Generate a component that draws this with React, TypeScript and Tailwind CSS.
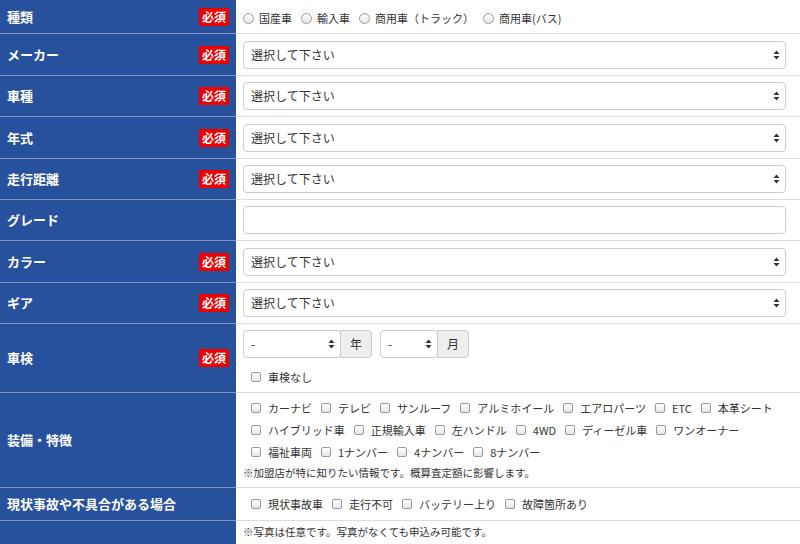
import React from "react";

const F = { fontFamily: '"Noto Sans CJK JP","Liberation Sans",sans-serif' };

function Badge() {
  return <span className="bg-[#ee0000] text-white text-[12px] font-bold leading-[18px] px-[3px] h-[18px] inline-block">必須</span>;
}
function Arrows() {
  return (
    <svg width="7" height="10" viewBox="0 0 7 10" className="absolute right-[5px] top-1/2 -translate-y-1/2">
      <path d="M3.5 0.5L6.5 4H0.5Z M3.5 9.5L6.5 6H0.5Z" fill="#333" />
    </svg>
  );
}
function Select({ text = "選択して下さい", w = "w-full" }: { text?: string; w?: string }) {
  return (
    <div className={`relative ${w} h-[28px] border border-[#ccc] rounded-[4px] bg-white text-[12px] text-[#333] pl-[7px] leading-[26px]`}>
      {text}
      <Arrows />
    </div>
  );
}
function Radio({ label }: { label: string }) {
  return (
    <span className="inline-flex items-center gap-[5px] mr-[9px] whitespace-nowrap">
      <span className="w-[11px] h-[11px] rounded-full border border-[#999] bg-gradient-to-b from-white to-[#e6e6e6]" />
      <span>{label}</span>
    </span>
  );
}
function Check({ label }: { label: string }) {
  return (
    <span className="inline-flex items-center gap-[7px] mr-[9px] whitespace-nowrap">
      <span className="w-[10px] h-[10px] rounded-[2px] border border-[#999] bg-gradient-to-b from-white to-[#e6e6e6]" />
      <span>{label}</span>
    </span>
  );
}
function Row({ label, req, h, children }: { label: string; req?: boolean; h: string; children?: React.ReactNode }) {
  return (
    <div className={`flex ${h} border-b border-[#dcdcdc]`}>
      <div className="w-[236px] shrink-0 bg-[#27509d] border-b border-[#7f96c2] -mb-px flex items-center justify-between pl-[7px] pr-[7px] text-white font-bold text-[13px]">
        <span>{label}</span>
        {req && <Badge />}
      </div>
      <div className="flex-1 pl-[7px] pr-[14px] flex flex-col justify-center text-[12px] text-[#333]">{children}</div>
    </div>
  );
}

export default function App() {
  return (
    <div style={F} className="w-[800px] h-[544px] overflow-hidden bg-white">
      <Row label="種類" req h="h-[34px]">
        <div className="flex items-center pt-[4px] text-[11px]">
          <Radio label="国産車" /><Radio label="輸入車" /><Radio label="商用車（トラック）" /><Radio label="商用車(バス)" />
        </div>
      </Row>
      <Row label="メーカー" req h="h-[42px]"><Select /></Row>
      <Row label="車種" req h="h-[41px]"><Select /></Row>
      <Row label="年式" req h="h-[42px]"><Select /></Row>
      <Row label="走行距離" req h="h-[41px]"><Select /></Row>
      <Row label="グレード" h="h-[41px]"><div className="h-[28px] border border-[#ccc] rounded-[4px]" /></Row>
      <Row label="カラー" req h="h-[42px]"><Select /></Row>
      <Row label="ギア" req h="h-[41px]"><Select /></Row>
      <Row label="車検" req h="h-[69px]">
        <div className="flex items-center">
          <Select text="-" w="w-[98px]" />
          <div className="w-[32px] h-[28px] bg-[#eee] border border-[#ccc] rounded-r-[4px] -ml-[1px] flex items-center justify-center">年</div>
          <div className="w-[8px]" />
          <Select text="-" w="w-[58px]" />
          <div className="w-[32px] h-[28px] bg-[#eee] border border-[#ccc] rounded-r-[4px] -ml-[1px] flex items-center justify-center">月</div>
        </div>
        <div className="mt-[11px] pl-[8px] text-[11px]"><Check label="車検なし" /></div>
      </Row>
      <Row label="装備・特徴" h="h-[95px]">
        <div className="text-[11px] leading-[22px]">
          <div className="pl-[8px] flex flex-nowrap">
            {["カーナビ","テレビ","サンルーフ","アルミホイール","エアロパーツ","ETC","本革シート"].map(t => <Check key={t} label={t} />)}
          </div>
          <div className="pl-[8px] flex flex-nowrap">
            {["ハイブリッド車","正規輸入車","左ハンドル","4WD","ディーゼル車","ワンオーナー"].map(t => <Check key={t} label={t} />)}
          </div>
          <div className="pl-[8px] flex flex-nowrap">
            {["福祉車両","1ナンバー","4ナンバー","8ナンバー"].map(t => <Check key={t} label={t} />)}
          </div>
          <div className="text-[10.5px] leading-[20px]">※加盟店が特に知りたい情報です。概算査定額に影響します。</div>
        </div>
      </Row>
      <Row label="現状事故や不具合がある場合" h="h-[33px]">
        <div className="pl-[8px] flex text-[11px]">
          {["現状事故車","走行不可","バッテリー上り","故障箇所あり"].map(t => <Check key={t} label={t} />)}
        </div>
      </Row>
      <Row label="" h="h-[30px]">
        <div className="text-[10.5px] -mt-[8px]">※写真は任意です。写真がなくても申込み可能です。</div>
      </Row>
    </div>
  );
}
